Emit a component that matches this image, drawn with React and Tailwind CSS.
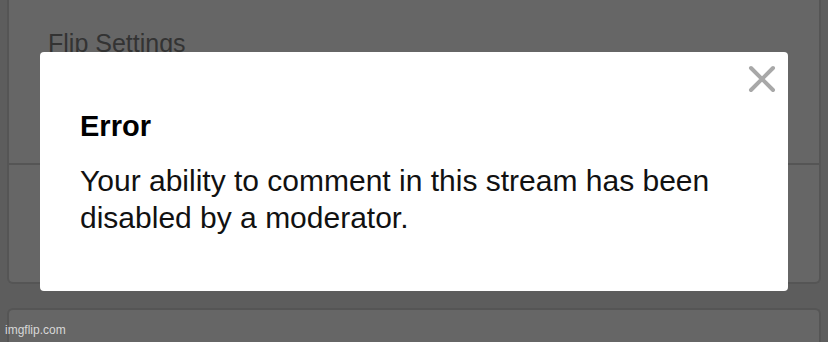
import React from 'react';

const font = { fontFamily: '"Liberation Sans", Arial, sans-serif' };

const App = () => {
  return (
    <div className="relative h-[342px] w-[828px] overflow-hidden bg-[#5d5d5d]" style={font}>
      {/* Page behind the overlay */}
      <div className="flex flex-col gap-[24px] pl-[7px] pr-[7px]">
        <div className="-mt-[10px] h-[294px] rounded-b-[6px] border-2 border-t-0 border-[#555555] bg-[#666666]">
          <div className="h-[175px] border-b-2 border-[#555555] pl-[39px] pt-[38px]">
            <div className="text-[25px] leading-[30px] text-[#333333]">Flip Settings</div>
          </div>
        </div>
        <div className="h-[60px] rounded-t-[6px] border-2 border-b-0 border-[#555555] bg-[#666666]"></div>
      </div>

      {/* Error modal */}
      <div className="absolute left-[40px] top-[52px] h-[239px] w-[748px] rounded-[4px] bg-white">
        <div className="flex justify-end pr-[12px] pt-[13px]">
          <svg width="28" height="28" viewBox="0 0 28 28" className="text-[#a8a8a8]">
            <path d="M3 3 L25 25 M25 3 L3 25" stroke="currentColor" strokeWidth="4" strokeLinecap="round" />
          </svg>
        </div>
        <div className="px-[40px] pt-[16px]">
          <div className="text-[29px] font-bold leading-[34px] text-black">Error</div>
          <p className="mt-[19px] text-[30px] leading-[37px] text-[#111111]">
            Your ability to comment in this stream has been
            <br />
            disabled by a moderator.
          </p>
        </div>
      </div>

      {/* Watermark */}
      <div className="absolute bottom-[3px] left-[5px] text-[12px] text-[#d8d8d8]">imgflip.com</div>
    </div>
  );
};

export default App;
